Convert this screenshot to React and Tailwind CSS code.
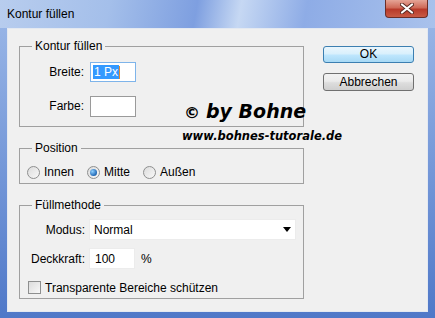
import React from 'react';

const Radio = ({ checked, label }) => (
  <div className="flex items-center">
    <span className="w-[13px] h-[13px] rounded-full border border-[#8e8f8f] bg-[linear-gradient(135deg,#dcdcdc,#f8f8f8)] flex items-center justify-center">
      {checked && (
        <span className="w-[7px] h-[7px] rounded-full bg-[radial-gradient(circle_at_35%_35%,#8fd0ff,#1f67b5_70%,#0d3f7a)]" />
      )}
    </span>
    <span className="ml-[4px]">{label}</span>
  </div>
);

const CloseIcon = () => (
  <svg width="14" height="11" viewBox="0 0 14 11">
    <path d="M2 1.5 L12 9.5 M12 1.5 L2 9.5" stroke="#5a2a22" strokeWidth="4" strokeLinecap="round" />
    <path d="M2 1.5 L12 9.5 M12 1.5 L2 9.5" stroke="#ffffff" strokeWidth="2.2" strokeLinecap="round" />
  </svg>
);

export default function App() {
  return (
    <div className="relative w-[435px] h-[318px] flex flex-col bg-[linear-gradient(180deg,#9db9e8,#6f93d6_60%,#4f78c8)] font-['Liberation_Sans',Arial,sans-serif] text-[12px] text-black">
      {/* Title bar */}
      <div className="h-[28px] flex items-start pl-[7px] pt-[7px] bg-[linear-gradient(100deg,#b8cdee_0%,#a4bfea_25%,#7e9fe0_45%,#c6d8f3_55%,#8eace6_70%,#a9c2ec_100%)]">
        <span className="text-[12px] leading-[14px]">Kontur füllen</span>
      </div>
      <div className="absolute top-0 left-[385px] w-[43px] h-[18px] rounded-b-[4px] border border-t-0 border-[#6b2e28] bg-[linear-gradient(180deg,#e5a496_0%,#cf6a58_45%,#b83a2a_55%,#c85a44_100%)] flex items-center justify-center">
        <CloseIcon />
      </div>

      {/* Content */}
      <div className="mx-[7px] h-[284px] bg-[#f0f0f0] border border-[#e4e9f1] flex pl-[11px] pt-[10px]">
        <div className="w-[285px] flex flex-col">
          <fieldset className="h-[88px] border border-[#a0a0a0]">
            <legend className="ml-[12px] px-[3px] leading-[14px]">Kontur füllen</legend>
            <div className="flex flex-col pt-[9px] gap-[14px]">
              <div className="flex items-center h-[20px]">
                <span className="w-[64px] text-right">Breite:</span>
                <div className="ml-[6px] w-[46px] h-[20px] bg-white border border-[#7eb4ea] flex items-center pl-[2px]">
                  <span className="bg-[#3399ff] text-white leading-[14px] px-[1px]">1 Px</span>
                  <span className="w-[1px] h-[13px] bg-[#e08a30]" />
                </div>
              </div>
              <div className="flex items-center h-[20px]">
                <span className="w-[64px] text-right">Farbe:</span>
                <div className="ml-[6px] w-[46px] h-[21px] bg-white border border-[#9a9a9a]" />
              </div>
            </div>
          </fieldset>

          <fieldset className="mt-[14px] h-[43px] border border-[#a0a0a0]">
            <legend className="ml-[12px] px-[3px] leading-[14px]">Position</legend>
            <div className="flex items-center pt-[8px] pl-[7px] gap-[13px]">
              <Radio label="Innen" />
              <Radio label="Mitte" checked />
              <Radio label="Außen" />
            </div>
          </fieldset>

          <fieldset className="mt-[14px] h-[101px] border border-[#a0a0a0]">
            <legend className="ml-[12px] px-[3px] leading-[14px]">Füllmethode</legend>
            <div className="flex flex-col pt-[7px]">
              <div className="flex items-center h-[21px]">
                <span className="w-[65px] text-right">Modus:</span>
                <div className="ml-[4px] w-[207px] h-[21px] bg-white border border-[#ececec] flex items-center justify-between pl-[4px] pr-[4px]">
                  <span>Normal</span>
                  <svg width="8" height="5" viewBox="0 0 8 5">
                    <path d="M0 0 L8 0 L4 5 Z" fill="#000" />
                  </svg>
                </div>
              </div>
              <div className="flex items-center h-[21px] mt-[8px]">
                <span className="w-[65px] text-right">Deckkraft:</span>
                <div className="ml-[4px] w-[46px] h-[21px] bg-white border border-[#ececec] flex items-center pl-[5px]">
                  100
                </div>
                <span className="ml-[6px]">%</span>
              </div>
              <div className="flex items-center h-[13px] mt-[12px] pl-[8px]">
                <span className="w-[13px] h-[13px] border border-[#8e8f8f] bg-[linear-gradient(135deg,#dcdcdc,#f8f8f8)]" />
                <span className="ml-[4px]">Transparente Bereiche schützen</span>
              </div>
            </div>
          </fieldset>
        </div>

        <div className="ml-[19px] mt-[7px] flex flex-col w-[91px]">
          <button className="h-[17px] rounded-[3px] border border-[#3c7fb1] bg-[linear-gradient(180deg,#eaf6fd_0%,#d9f0fc_45%,#bee6fd_55%,#a7d9f5_100%)] leading-[15px]">
            OK
          </button>
          <button className="mt-[10px] h-[18px] rounded-[3px] border border-[#707070] bg-[linear-gradient(180deg,#f2f2f2_0%,#ebebeb_45%,#dddddd_55%,#cfcfcf_100%)] leading-[16px]">
            Abbrechen
          </button>
        </div>
      </div>

      {/* Watermark */}
      <div className="absolute left-[182px] top-[102px] font-['DejaVu_Sans',sans-serif] font-bold italic leading-none">
        <div className="text-[19px] pl-[2px] flex items-baseline">
          <span className="text-[16px] mr-[6px]">©</span>
          <span>by Bohne</span>
        </div>
        <div className="text-[11.5px] mt-[10px]">www.bohnes-tutorale.de</div>
      </div>
    </div>
  );
}
